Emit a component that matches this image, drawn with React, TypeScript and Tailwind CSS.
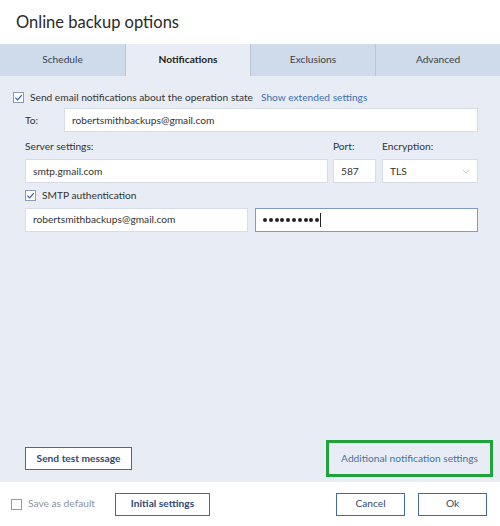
import React from "react";

const font = { fontFamily: 'Lato, "Open Sans", sans-serif' };

function Check({ checked }: { checked: boolean }) {
  return (
    <span className="flex h-[11px] w-[11px] items-center justify-center border border-[#8e9ab0] bg-white">
      {checked && (
        <svg viewBox="0 0 10 10" className="h-[9px] w-[9px]">
          <path d="M1.5 5.2 L4 7.6 L8.6 2.4" fill="none" stroke="#2b5fa8" strokeWidth="1.3" />
        </svg>
      )}
    </span>
  );
}

function Field({ value, className = "", focused = false }: { value: React.ReactNode; className?: string; focused?: boolean }) {
  return (
    <div
      className={`flex h-[24px] items-center bg-white px-[7px] text-[10.2px] text-[#333] border ${
        focused ? "border-[#7d9bc9]" : "border-[#d6dde8]"
      } ${className}`}
    >
      {value}
    </div>
  );
}

function Btn({ children, className = "" }: { children: React.ReactNode; className?: string }) {
  return (
    <div
      className={`flex h-[23px] items-center justify-center border-[1.5px] border-[#3e6aa8] bg-white text-[10.2px] font-bold text-[#2e4a74] ${className}`}
    >
      {children}
    </div>
  );
}

export default function App() {
  const tabs = ["Schedule", "Notifications", "Exclusions", "Advanced"];
  return (
    <div className="flex h-[526px] w-[500px] flex-col bg-white" style={font}>
      <div className="flex h-[44px] items-center px-[16px] text-[16.5px] text-[#2a2a2a]">Online backup options</div>
      <div className="grid h-[32px] grid-cols-4">
        {tabs.map((t, i) => (
          <div
            key={t}
            className={`flex items-center justify-center text-[10.2px] ${
              i === 1
                ? "bg-[#e8edf5] font-bold text-[#222]"
                : "bg-[#cfdbea] text-[#3a3f48]"
            } ${i > 0 ? "border-l border-[#b9c6d8]" : ""}`}
          >
            {t}
          </div>
        ))}
      </div>
      <div className="flex flex-1 flex-col bg-[#e8edf5] pl-[25px] pr-[22px] pb-[5px]">
        <div className="-ml-[12px] mt-[14px] flex items-center gap-[6px] text-[10.2px] text-[#333]">
          <Check checked />
          <span>Send email notifications about the operation state</span>
          <span className="ml-[2px] text-[#3f6eb0]">Show extended settings</span>
        </div>
        <div className="mt-[3px] flex items-center text-[10.2px] text-[#333]">
          <span className="w-[39px]">To:</span>
          <Field value="robertsmithbackups@gmail.com" className="flex-1" />
        </div>
        <div className="mt-[7px] flex gap-[5px] text-[10.2px] text-[#333]">
          <div className="flex flex-1 flex-col gap-[5px]">
            <span className="leading-[15px]">Server settings:</span>
            <Field value="smtp.gmail.com" />
          </div>
          <div className="flex w-[43px] flex-col gap-[5px]">
            <span className="leading-[15px]">Port:</span>
            <Field value="587" />
          </div>
          <div className="ml-[1px] flex w-[96px] flex-col gap-[5px]">
            <span className="leading-[15px]">Encryption:</span>
            <Field
              value={
                <div className="flex w-full items-center justify-between">
                  <span>TLS</span>
                  <svg viewBox="0 0 10 6" className="h-[5px] w-[8px]">
                    <path d="M1 1 L5 5 L9 1" fill="none" stroke="#a8b2c2" strokeWidth="1" />
                  </svg>
                </div>
              }
            />
          </div>
        </div>
        <div className="mt-[5px] flex items-center gap-[6px] text-[10.2px] text-[#333]">
          <Check checked />
          <span>SMTP authentication</span>
        </div>
        <div className="mt-[4px] flex gap-[7px]">
          <Field value="robertsmithbackups@gmail.com" className="w-[223px]" />
          <Field
            focused
            value={
              <span className="flex items-center">
                <span className="flex gap-[1.8px]">
                  {Array.from({ length: 10 }).map((_, i) => (
                    <span key={i} className="h-[4px] w-[4px] rounded-full bg-[#222]" />
                  ))}
                </span>
                <span className="ml-[1px] h-[14px] w-px bg-[#222]" />
              </span>
            }
            className="flex-1"
          />
        </div>
        <div className="mt-auto flex items-center justify-between">
          <Btn className="w-[107px]">Send test message</Btn>
          <div className="-mr-[15px] flex h-[37px] w-[167px] items-center justify-center border-[3px] border-[#1fa33a] text-[10.2px] text-[#4a6fa5]">
            Additional notification settings
          </div>
        </div>
      </div>
      <div className="flex h-[44px] items-center px-[11px] text-[10.2px]">
        <Check checked={false} />
        <span className="ml-[6px] text-[#8a93a3]">Save as default</span>
        <Btn className="ml-[20px] w-[95px]">Initial settings</Btn>
        <Btn className="ml-auto w-[69px] !font-normal">Cancel</Btn>
        <Btn className="ml-[13px] mr-[2px] w-[69px] !font-normal">Ok</Btn>
      </div>
    </div>
  );
}
